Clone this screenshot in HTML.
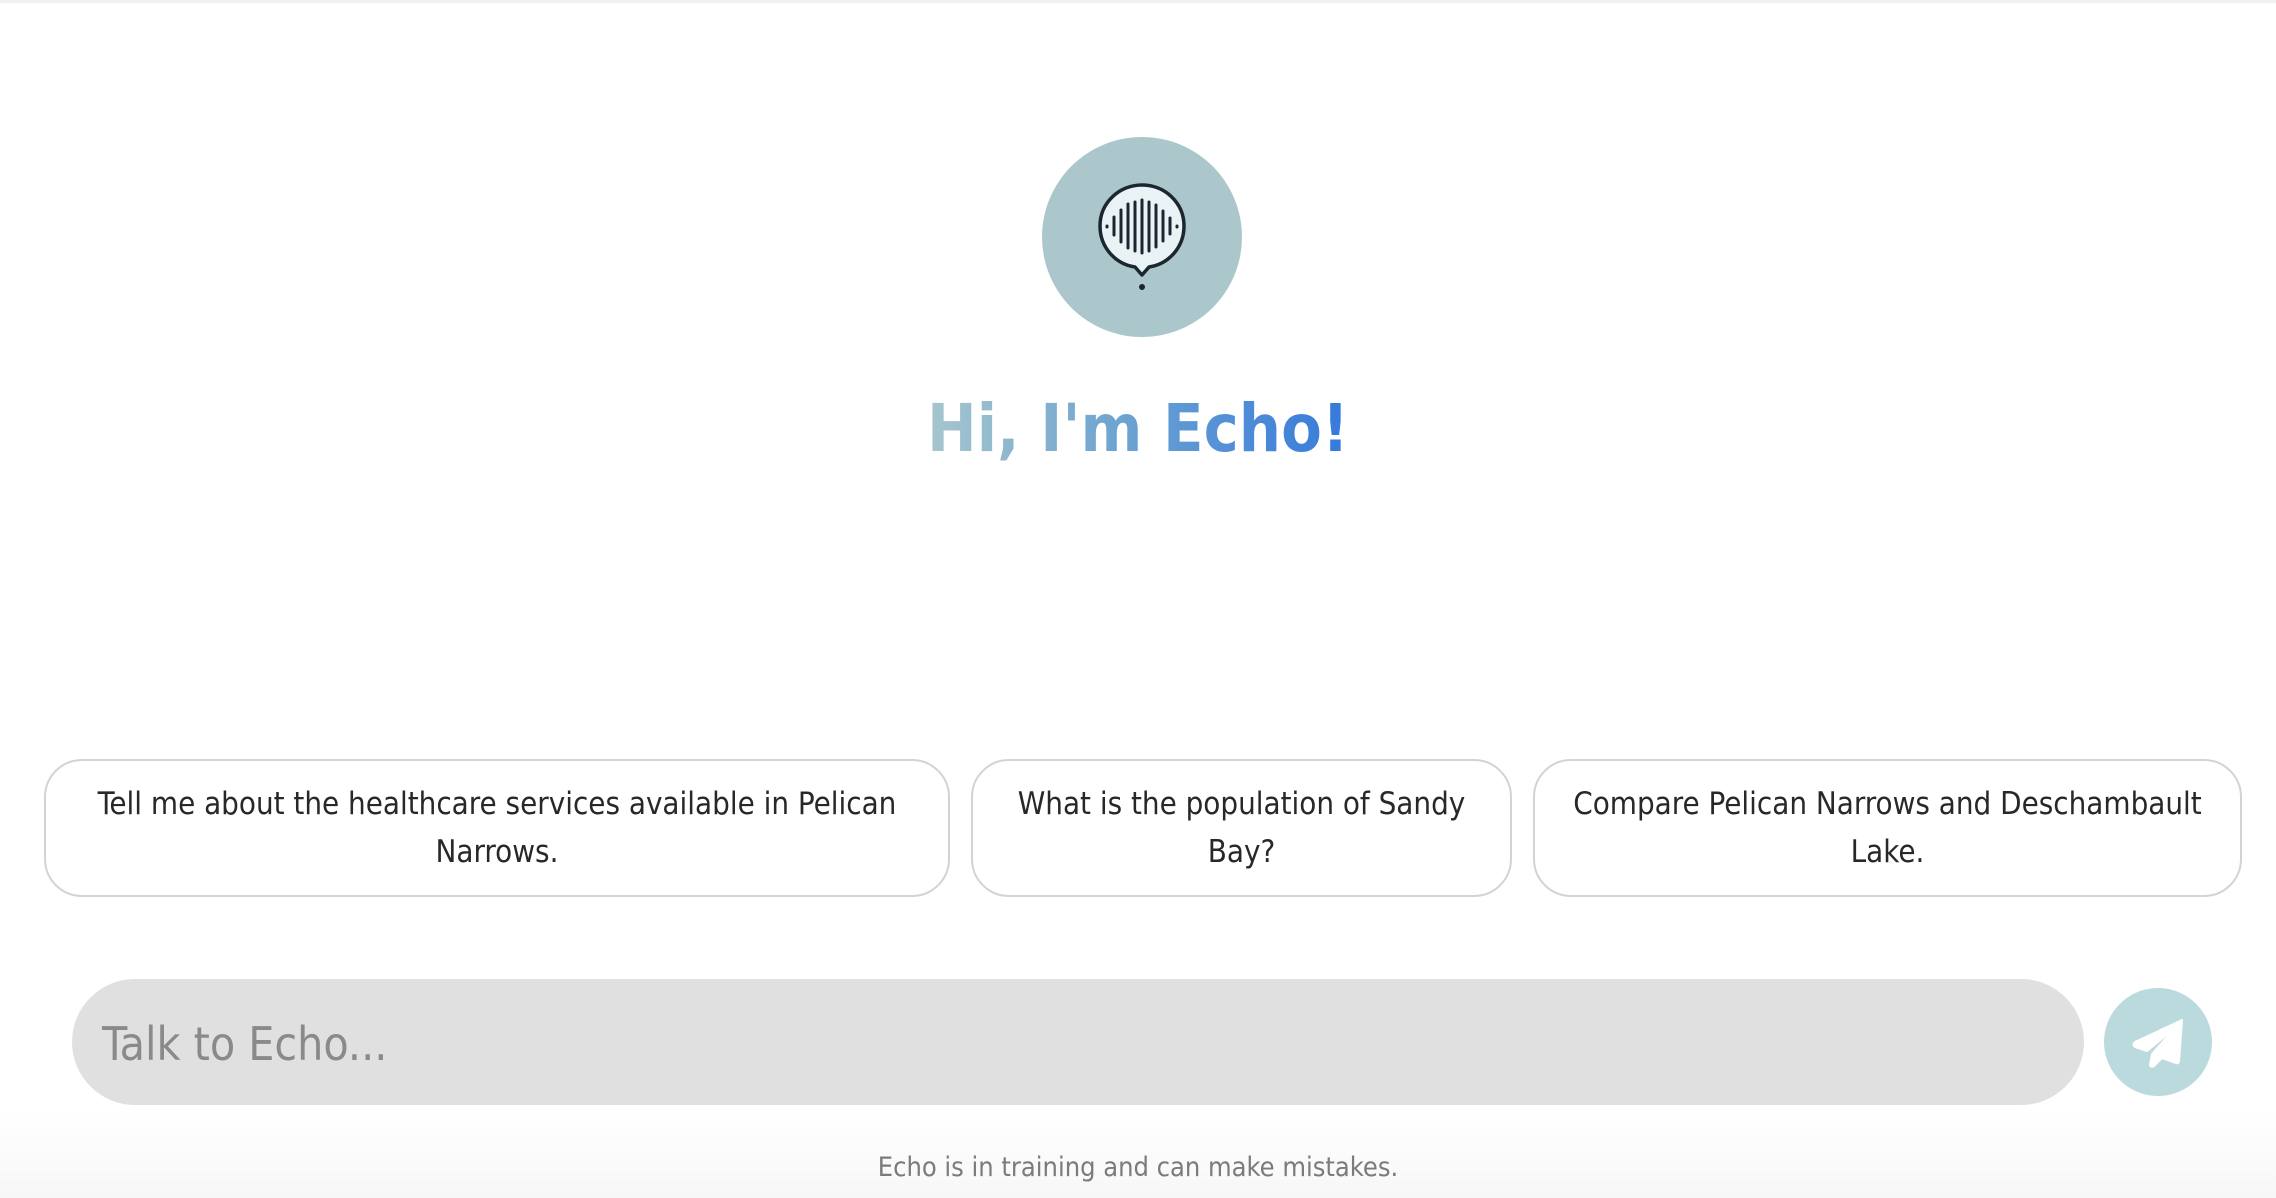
<!DOCTYPE html>
<html><head><meta charset="utf-8"><style>
html,body{margin:0;padding:0;}
body{width:2276px;height:1198px;position:relative;overflow:hidden;background:#fff;font-family:"DejaVu Sans Condensed","DejaVu Sans","Liberation Sans",sans-serif;}
.topline{position:absolute;left:0;top:0;width:2276px;height:3px;background:#f1f1f1;}
.bottomfade{position:absolute;left:0;top:1110px;width:2276px;height:88px;background:linear-gradient(#fff,#f7f7f7);}
.avatar{position:absolute;left:1042px;top:137px;width:200px;height:200px;border-radius:50%;background:#acc7cb;}
.title{position:absolute;left:0;width:2276px;top:389px;text-align:center;font-weight:bold;font-size:66px;line-height:80px;}
.title span{background:linear-gradient(90deg,#a7c6cd,#6ea4d0 45%,#3579dc);-webkit-background-clip:text;background-clip:text;color:transparent;}
.card{position:absolute;top:759px;height:138px;border:2px solid #d3d3d3;border-radius:38px;box-sizing:border-box;display:flex;align-items:center;justify-content:center;text-align:center;color:#282828;font-size:31px;line-height:48px;padding:0 12px;}
.input{position:absolute;left:72px;top:979px;width:2012px;height:126px;border-radius:63px;background:#e0e0e0;}
.ph{position:absolute;left:102px;top:1016px;font-size:46px;color:#8a8a8a;line-height:56px;}
.send{position:absolute;left:2104px;top:988px;width:108px;height:108px;border-radius:50%;background:#bbdade;}
.foot{position:absolute;left:0;width:2276px;top:1152px;text-align:center;font-size:27px;color:#7b7b7b;}
</style></head><body>
<div class="topline"></div>
<div class="bottomfade"></div>
<div class="avatar"></div>
<svg style="position:absolute;left:1042px;top:137px" width="200" height="200" viewBox="0 0 200 200">
<path d="M93 130 C73 127 58 110 58 89 C58 66 77 48 100 48 C123 48 142 66 142 89 C142 110 127 127 107 130 L100 138 Z" fill="#e9f3f5" stroke="#1b2630" stroke-width="3.5" stroke-linejoin="round"/>
<circle cx="100" cy="150" r="3" fill="#1b2630"/>
<g stroke="#1b2630" stroke-width="3" stroke-linecap="round">
<line x1="65" y1="89" x2="65" y2="90"/>
<line x1="72" y1="80" x2="72" y2="98"/>
<line x1="79" y1="73" x2="79" y2="105"/>
<line x1="86" y1="67" x2="86" y2="111"/>
<line x1="93" y1="65" x2="93" y2="114"/>
<line x1="100" y1="63" x2="100" y2="116"/>
<line x1="107" y1="65" x2="107" y2="114"/>
<line x1="114" y1="68" x2="114" y2="110"/>
<line x1="121" y1="74" x2="121" y2="104"/>
<line x1="128" y1="81" x2="128" y2="97"/>
<line x1="135" y1="89" x2="135" y2="90"/>
</g>
</svg>
<div class="title"><span>Hi, I'm Echo!</span></div>
<div class="card" style="left:44px;width:906px;">Tell me about the healthcare services available in Pelican Narrows.</div>
<div class="card" style="left:971px;width:541px;">What is the population of Sandy Bay?</div>
<div class="card" style="left:1533px;width:709px;">Compare Pelican Narrows and Deschambault Lake.</div>
<div class="input"></div>
<div class="ph">Talk to Echo...</div>
<div class="send"></div>
<svg style="position:absolute;left:2104px;top:988px" width="108" height="108" viewBox="0 0 108 108">
<path d="M78 32 L31 54 Q28 57 31 59 L43 63 L71 40 L48 66 L46 77 Q47 80 50 78 L58 70 L72 75 Q75 76 75 73 Z" fill="#fff" stroke="#fff" stroke-width="2" stroke-linejoin="round"/>
</svg>
<div class="foot">Echo is in training and can make mistakes.</div>
</body></html>
